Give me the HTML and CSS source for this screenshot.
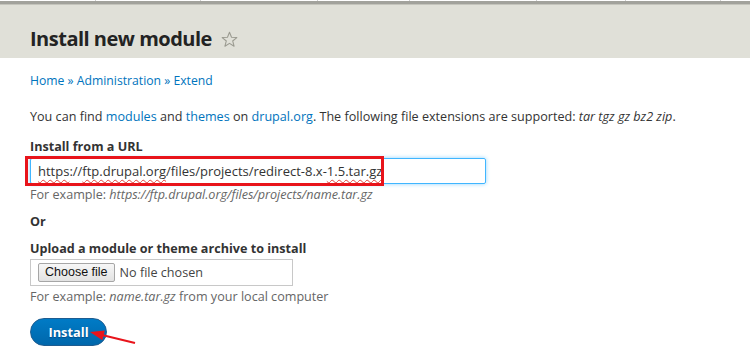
FILE: index.html
```html
<!DOCTYPE html>
<html>

<head>
  <meta charset="UTF-8">
  <link rel="stylesheet" href="styles.css">
</head>

<body>
  <div class="toolbar">
    <span style="width: 95px"></span>
    <span style="width: 104px"></span>
    <span style="width: 116px"></span>
    <span style="width: 91px"></span>
    <span style="width: 126px"></span>
    <span style="width: 88px"></span>
    <span style="width: 94px"></span>
  </div>

  <div class="page-header">
    <h1 class="page-title">Install new module
      <svg class="shortcut-star" viewBox="0 0 16 16" width="17" height="17">
        <path d="M8 1.2 L9.9 5.9 L14.9 6.2 L11 9.4 L12.3 14.3 L8 11.6 L3.7 14.3 L5 9.4 L1.1 6.2 L6.1 5.9 Z" fill="none" stroke="#9a9a90" stroke-width="1" stroke-linejoin="round" />
      </svg>
    </h1>
  </div>

  <div class="content">
    <div class="breadcrumb">
      <a href="#">Home</a> » <a href="#">Administration</a> » <a href="#">Extend</a>
    </div>

    <p class="intro">You can find <a href="#">modules</a> and <a href="#">themes</a> on <a href="#">drupal.org</a>. The following file extensions are supported: <em>tar tgz gz bz2 zip</em>.</p>

    <div class="form-item">
      <label class="form-label">Install from a URL</label>
      <div class="url-wrap">
        <div class="form-text is-focused"><span class="misspelled">https</span>://<span class="misspelled">ftp.drupal.org</span>/files/projects/redirect-8.x-<span class="misspelled">1.5.tar.gz</span></div>
        <div class="mark-box"></div>
      </div>
      <div class="description">For example: <em>https://ftp.drupal.org/files/projects/name.tar.gz</em></div>
    </div>

    <div class="or-label">Or</div>

    <div class="form-item form-item-upload">
      <label class="form-label">Upload a module or theme archive to install</label>
      <div class="form-file">
        <span class="file-btn">Choose file</span>
        <span class="file-name">No file chosen</span>
      </div>
      <div class="description">For example: <em>name.tar.gz</em> from your local computer</div>
    </div>

    <div class="form-actions">
      <span class="button-primary">Install</span>
      <svg class="mark-arrow" viewBox="0 0 50 20" width="50" height="20">
        <path d="M47 17 L14 9" stroke="#e8141b" stroke-width="2" fill="none" />
        <path d="M2 6 L16.8 4.4 L14.4 14.2 Z" fill="#e8141b" />
      </svg>
    </div>
  </div>
</body>

</html>
```

FILE: styles.css
```css
body {
  margin: 0;
  font-family: 'Open Sans', 'DejaVu Sans', sans-serif;
  font-size: 12.6px;
  color: #333;
  background: #fff;
}

a {
  color: #0074bd;
  text-decoration: none;
}

.toolbar {
  display: flex;
  height: 1px;
  border-bottom: 3px solid #a2a29c;
  box-shadow: 0 1px 0 #c4c4bc;
}

.toolbar span {
  border-right: 1px solid #cfcfcf;
}

.page-header {
  background: #e0e0d8;
  box-sizing: border-box;
  height: 53px;
  padding: 22px 30px 0 30px;
  margin-top: 1px;
}

.page-title {
  margin: 0;
  font-size: 20px;
  line-height: 24px;
  letter-spacing: -0.5px;
  font-weight: bold;
  color: #232323;
  display: flex;
  align-items: center;
  gap: 9px;
}

.content {
  padding: 0 30px;
}

.breadcrumb {
  margin-top: 14px;
  font-size: 12.2px;
  line-height: 18px;
  color: #0074bd;
}

.intro {
  margin: 18px 0 0 0;
  line-height: 18px;
}

.intro em,
.description em {
  font-style: italic;
}

.form-item {
  margin-top: 12px;
}

.form-item-upload {
  margin-top: 9px;
}

.form-label {
  display: block;
  font-weight: bold;
  line-height: 18px;
  margin-bottom: 2px;
}

.form-item-upload .form-label {
  margin-bottom: 1px;
}

.url-wrap {
  position: relative;
  width: 456px;
}

.form-text {
  box-sizing: border-box;
  height: 26px;
  line-height: 24px;
  padding: 0 7px;
  font-size: 13px;
  border: 1px solid #b8b8b8;
  border-radius: 2px;
  white-space: nowrap;
  overflow: hidden;
}

.form-text.is-focused {
  border-color: #40b6ff;
  box-shadow: 0 0 4px #8fd4ff;
}

.misspelled {
  text-decoration: underline wavy #e0403a;
  text-decoration-thickness: 1px;
  text-underline-offset: 3px;
}

.mark-box {
  position: absolute;
  left: -5px;
  top: -2px;
  width: 359px;
  height: 30px;
  box-sizing: border-box;
  border: 3px solid #e8141b;
}

.description {
  margin-top: 2px;
  line-height: 17px;
  color: #666;
}

.or-label {
  margin-top: 10px;
  font-weight: bold;
  line-height: 18px;
}

.form-file {
  box-sizing: border-box;
  width: 263px;
  height: 27px;
  border: 1px solid #c8c8c8;
  display: flex;
  align-items: center;
  gap: 5px;
  padding: 0 7px;
}

.file-btn {
  box-sizing: border-box;
  height: 19px;
  line-height: 17px;
  font-family: 'Liberation Sans', Arial, sans-serif;
  font-size: 12.5px;
  color: #111;
  padding: 0 6px;
  border: 1px solid #a6a6a6;
  border-radius: 2px;
  background: linear-gradient(#f7f7f7, #e2e2e2);
}

.file-name {
  color: #444;
}

.form-actions {
  position: relative;
  margin-top: 13px;
  height: 30px;
}

.button-primary {
  display: inline-block;
  box-sizing: border-box;
  width: 77px;
  height: 28px;
  line-height: 26px;
  text-align: center;
  border-radius: 16px;
  border: 1px solid #1e5c90;
  background: linear-gradient(#007bc6, #0067ab);
  color: #fff;
  font-weight: bold;
  font-size: 12.8px;
  text-shadow: 0 1px 1px #004b8a;
}

.mark-arrow {
  position: absolute;
  left: 58px;
  top: 8px;
}
```
